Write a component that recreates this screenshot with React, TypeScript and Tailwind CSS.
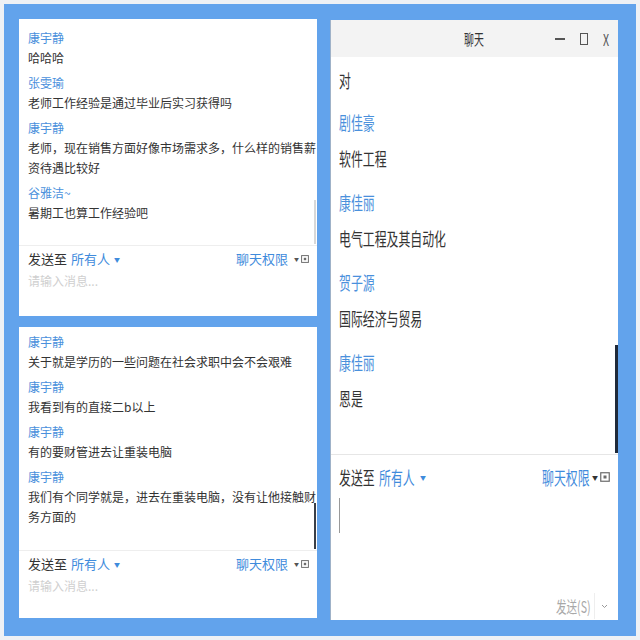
import React from 'react';

type Msg = { name?: string; lines: string[] };

const topMsgs: Msg[] = [
  { name: '康宇静', lines: ['哈哈哈'] },
  { name: '张雯瑜', lines: ['老师工作经验是通过毕业后实习获得吗'] },
  { name: '康宇静', lines: ['老师，现在销售方面好像市场需求多，什么样的销售薪', '资待遇比较好'] },
  { name: '谷雅洁~', lines: ['暑期工也算工作经验吧'] },
];

const bottomMsgs: Msg[] = [
  { name: '康宇静', lines: ['关于就是学历的一些问题在社会求职中会不会艰难'] },
  { name: '康宇静', lines: ['我看到有的直接二b以上'] },
  { name: '康宇静', lines: ['有的要财管进去让重装电脑'] },
  { name: '康宇静', lines: ['我们有个同学就是，进去在重装电脑，没有让他接触财', '务方面的'] },
];

const rightMsgs: Msg[] = [
  { lines: ['对'] },
  { name: '剧佳豪', lines: ['软件工程'] },
  { name: '康佳丽', lines: ['电气工程及其自动化'] },
  { name: '贺子源', lines: ['国际经济与贸易'] },
  { name: '康佳丽', lines: ['恩是'] },
];

const font = { fontFamily: '"Noto Sans CJK SC", "Noto Sans", sans-serif' };

const BoxIcon = ({ size = 9 }: { size?: number }) => (
  <svg width={size} height={size} viewBox="0 0 10 10" className="shrink-0">
    <rect x="0.75" y="0.75" width="8.5" height="8.5" fill="none" stroke="#6b6b6b" strokeWidth="1.2" />
    <rect x="3.5" y="3.5" width="3" height="3" fill="#6b6b6b" />
  </svg>
);

const LeftPanel = ({ msgs, height, listH, pt, thumb }: { msgs: Msg[]; height: string; listH: string; pt: string; thumb: string }) => (
  <div className={`bg-white ${height} flex flex-col`}>
    <div className={`relative ${listH} pl-[9px] ${pt} overflow-hidden`}>
      {msgs.map((m, i) => (
        <div key={i} className="mb-[4px]">
          <div className="h-[21px] leading-[21px] text-[12px] text-[#4a90dc]">{m.name}</div>
          {m.lines.map((l, j) => (
            <div key={j} className="h-[20px] leading-[20px] text-[12px] text-[#333] whitespace-nowrap">{l}</div>
          ))}
        </div>
      ))}
      <div className={`absolute right-[1px] w-[2px] ${thumb}`} />
    </div>
    <div className="border-t border-[#eeeeee] pl-[9px] pr-[8px]">
      <div className="h-[26px] flex items-center justify-between text-[13px]">
        <div className="flex items-center">
          <span className="text-[#333]">发送至</span>
          <span className="text-[#3f8bdc] ml-[4px]">所有人</span>
          <span className="text-[#3f8bdc] text-[6px] ml-[4px]">▼</span>
        </div>
        <div className="flex items-center">
          <span className="text-[#3f8bdc]">聊天权限</span>
          <span className="text-[#555] text-[5px] ml-[6px] mr-[2px]">▼</span>
          <BoxIcon size={8} />
        </div>
      </div>
      <div className="h-[18px] leading-[18px] text-[12px] text-[#cfcfcf]">请输入消息...</div>
    </div>
  </div>
);

// horizontally squeezed text, as in the reference window; box = layout width
const Sq = ({ children, box = '', className = '' }: { children: React.ReactNode; box?: string; className?: string }) => (
  <span className={`inline-block ${box}`}>
    <span className={`inline-block origin-left scale-x-[0.66] whitespace-nowrap ${className}`}>{children}</span>
  </span>
);

const App: React.FC = () => {
  return (
    <div className="w-[640px] h-[640px] bg-[#eef1f5] p-[4px]" style={font}>
      <div className="w-full h-full bg-[#62a3ec] flex pl-[15px] pt-[15px] gap-[13px]">
        <div className="w-[298px] flex flex-col gap-[11px]">
          <LeftPanel msgs={topMsgs} height="h-[297px]" listH="h-[226px]" pt="pt-[8px]" thumb="top-[181px] h-[44px] bg-[#d8d8d8]" />
          <LeftPanel msgs={bottomMsgs} height="h-[291px]" listH="h-[223px]" pt="pt-[4px]" thumb="top-[176px] h-[46px] bg-[#3a3f48]" />
        </div>

        <div className="w-[288px] h-[600px] mt-[1px] bg-white flex flex-col border-l border-[#9fb2c8]">
          <div className="h-[37px] bg-[#f3f3f3] relative flex items-center justify-center text-[#333]">
            <Sq box="w-[22px]" className="text-[15px]">聊天</Sq>
            <div className="absolute right-[5px] top-0 h-full flex items-center text-[#555]">
              <div className="w-[10px] h-[2px] bg-[#555]" />
              <div className="w-[8px] h-[12px] border-[1.5px] border-[#555] ml-[15px]" />
              <Sq box="w-[10px] ml-[15px]" className="text-[16px]">X</Sq>
            </div>
          </div>

          <div className="relative h-[397px] pl-[8px] pt-[5px] overflow-hidden">
            {rightMsgs.map((m, i) => (
              <div key={i} className={i === 0 ? 'mb-[6px]' : 'mb-[8px]'}>
                {m.name && (
                  <div className="h-[36px] leading-[36px] text-[18px] text-[#4a90dc]">
                    <Sq>{m.name}</Sq>
                  </div>
                )}
                {m.lines.map((l, j) => (
                  <div key={j} className="h-[36px] leading-[36px] text-[18px] text-[#333]">
                    <Sq>{l}</Sq>
                  </div>
                ))}
              </div>
            ))}
            <div className="absolute right-0 top-[288px] w-[3px] h-[108px] bg-[#1f2a3a]" />
          </div>

          <div className="flex-1 border-t border-[#e6e6e6] pl-[8px] pr-[8px] flex flex-col">
            <div className="h-[44px] flex items-center justify-between text-[18px]">
              <div className="flex items-center">
                <Sq box="w-[40px]" className="text-[#333]">发送至</Sq>
                <Sq box="w-[40px]" className="text-[#3f8bdc]">所有人</Sq>
                <span className="text-[#3f8bdc] text-[6px] ml-[1px]">▼</span>
              </div>
              <div className="flex items-center">
                <Sq box="w-[50px]" className="text-[#3f8bdc]">聊天权限</Sq>
                <span className="text-[#333] text-[6px] mr-[2px]">▼</span>
                <BoxIcon size={10} />
              </div>
            </div>
            <div className="w-[1px] h-[35px] bg-[#999] mt-[-1px]" />
            <div className="flex-1" />
            <div className="h-[28px] flex items-center justify-end">
              <Sq box="w-[38px]" className="text-[16px] text-[#a8a8a8]">发送(S)</Sq>
              <div className="w-[1px] h-[26px] bg-[#eeeeee] mr-[6px]" />
              <svg width="7" height="5" viewBox="0 0 7 5" className="mr-[2px]">
                <path d="M1 1l2.5 2.5L6 1" fill="none" stroke="#999" strokeWidth="1" />
              </svg>
            </div>
          </div>
        </div>
      </div>
    </div>
  );
};

export default App;
